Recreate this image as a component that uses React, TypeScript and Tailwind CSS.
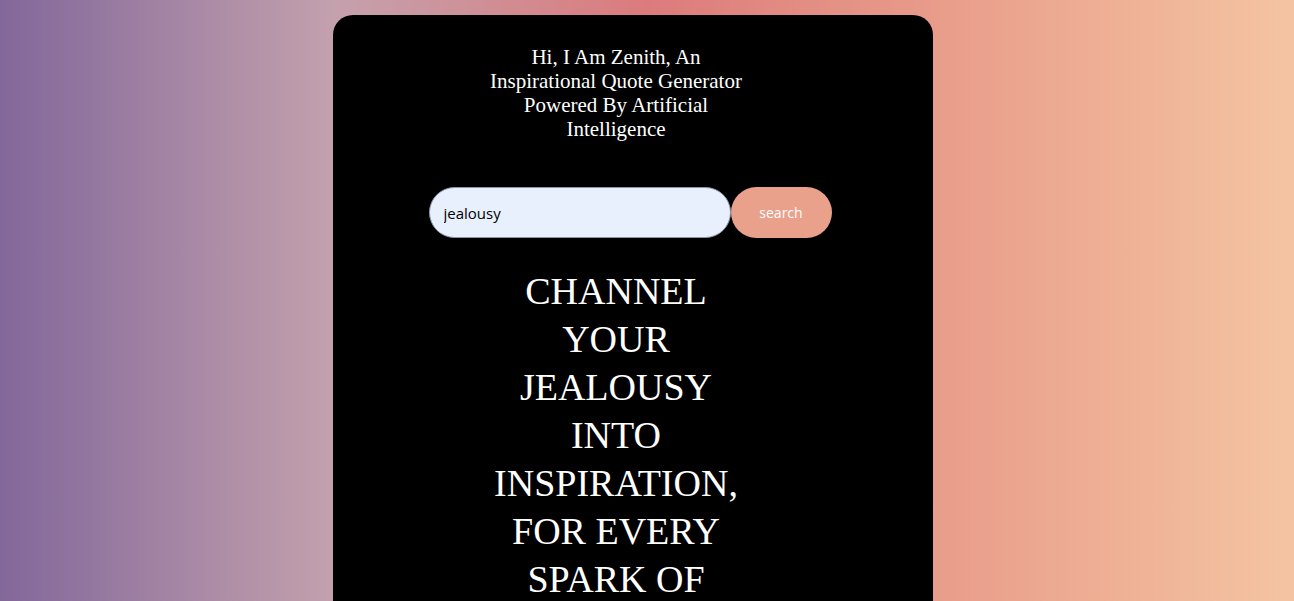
import React from "react";

const headerLines = [
  "Hi, I Am Zenith, An",
  "Inspirational Quote Generator",
  "Powered By Artificial",
  "Intelligence",
];

const quoteLines = [
  "CHANNEL",
  "YOUR",
  "JEALOUSY",
  "INTO",
  "INSPIRATION,",
  "FOR EVERY",
  "SPARK OF",
  "ENVY CAN",
  "IGNITE",
  "YOUR OWN",
  "GREATNESS.",
];

export default function App() {
  return (
    <div className="min-h-[601px] w-full bg-[linear-gradient(to_right,#82679a_0%,#c4a1ad_26%,#dc7b7c_50%,#eaa08c_75%,#f4c4a2_100%)] pt-[15px] pr-[28px] flex justify-center overflow-hidden h-[601px]">
      <div className="w-[600px] bg-black rounded-[20px] flex flex-col items-center pr-[34px] pt-[30px] pb-10 h-max">
        <h1
          className="text-white text-[21px] leading-[24px] text-center font-normal"
          style={{ fontFamily: '"Liberation Serif", "Times New Roman", serif' }}
        >
          {headerLines.map((l) => (
            <span key={l} className="block">
              {l}
            </span>
          ))}
        </h1>
        <div className="flex items-center mt-[46px] ml-[28px]">
          <input
            readOnly
            value="jealousy"
            className="w-[302px] h-[51px] rounded-full bg-[#e8f0fe] border border-[#8d97a8] pl-[14px] text-[15px] text-black outline-none"
            style={{ fontFamily: '"Open Sans", "Noto Sans", sans-serif' }}
          />
          <button
            className="w-[101px] h-[51px] rounded-full bg-[#e9a18b] text-white text-[14px]"
            style={{ fontFamily: '"Open Sans", "Noto Sans", sans-serif' }}
          >
            search
          </button>
        </div>
        <div
          className="mt-[29px] text-white text-[38px] leading-[48px] text-center"
          style={{ fontFamily: '"Liberation Serif", "Times New Roman", serif' }}
        >
          {quoteLines.map((l) => (
            <span key={l} className="block">
              {l}
            </span>
          ))}
        </div>
      </div>
    </div>
  );
}
